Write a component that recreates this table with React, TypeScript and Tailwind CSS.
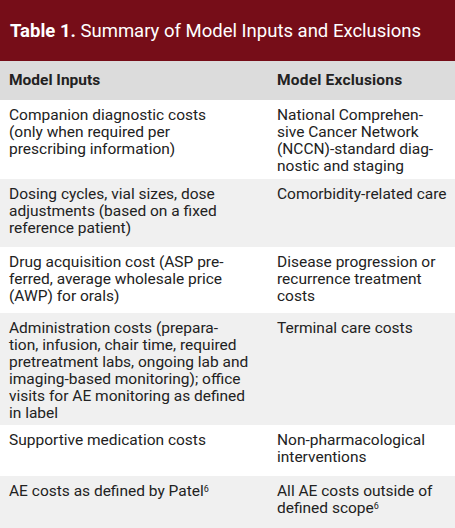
const rows: { h: string; inputs: React.ReactNode; exclusions: React.ReactNode }[] = [
  {
    h: 'h-[79px]',
    inputs: (
      <>
        Companion diagnostic costs
        <br />
        (only when required per
        <br />
        prescribing information)
      </>
    ),
    exclusions: (
      <>
        National Comprehen-
        <br />
        sive Cancer Network
        <br />
        (NCCN)-standard diag-
        <br />
        nostic and staging
      </>
    ),
  },
  {
    h: 'h-[68px]',
    inputs: (
      <>
        Dosing cycles, vial sizes, dose
        <br />
        adjustments (based on a fixed
        <br />
        reference patient)
      </>
    ),
    exclusions: <>Comorbidity-related care</>,
  },
  {
    h: 'h-[66px]',
    inputs: (
      <>
        Drug acquisition cost (ASP pre-
        <br />
        ferred, average wholesale price
        <br />
        (AWP) for orals)
      </>
    ),
    exclusions: (
      <>
        Disease progression or
        <br />
        recurrence treatment
        <br />
        costs
      </>
    ),
  },
  {
    h: 'h-[112px]',
    inputs: (
      <>
        Administration costs (prepara-
        <br />
        tion, infusion, chair time, required
        <br />
        pretreatment labs, ongoing lab and
        <br />
        imaging-based monitoring); office
        <br />
        visits for AE monitoring as defined
        <br />
        in label
      </>
    ),
    exclusions: <>Terminal care costs</>,
  },
  {
    h: 'h-[51px]',
    inputs: <>Supportive medication costs</>,
    exclusions: (
      <>
        Non-pharmacological
        <br />
        interventions
      </>
    ),
  },
  {
    h: 'h-[60px]',
    inputs: (
      <>
        AE costs as defined by Patel<sup className="text-[9px]">6</sup>
      </>
    ),
    exclusions: (
      <>
        All AE costs outside of
        <br />
        defined scope<sup className="text-[9px]">6</sup>
      </>
    ),
  },
]

export default function App() {
  return (
    <div className="w-[455px] h-[528px] overflow-hidden bg-white font-['Roboto',sans-serif] text-[#222]">
      <div className="h-[61px] bg-[#760d18] flex items-center px-[10px] pt-[1px]">
        <h1 className="text-white text-[18.5px] leading-none">
          <span className="font-bold">Table 1.</span> Summary of Model Inputs and Exclusions
        </h1>
      </div>
      <div className="grid grid-cols-[268px_1fr] bg-[#dcdcdc] h-[39px] items-center pt-[1px] text-[15.5px] font-bold">
        <div className="pl-[9px]">Model Inputs</div>
        <div className="pl-[9px] tracking-[0.2px]">Model Exclusions</div>
      </div>
      {rows.map((row, i) => (
        <div
          key={i}
          className={`grid grid-cols-[268px_1fr] text-[15.5px] leading-[17px] pt-[7px] ${row.h} ${
            i % 2 === 1 ? 'bg-[#f0f0f0]' : 'bg-white'
          }`}
        >
          <div className="pl-[9px]">{row.inputs}</div>
          <div className="pl-[9px]">{row.exclusions}</div>
        </div>
      ))}
    </div>
  )
}
